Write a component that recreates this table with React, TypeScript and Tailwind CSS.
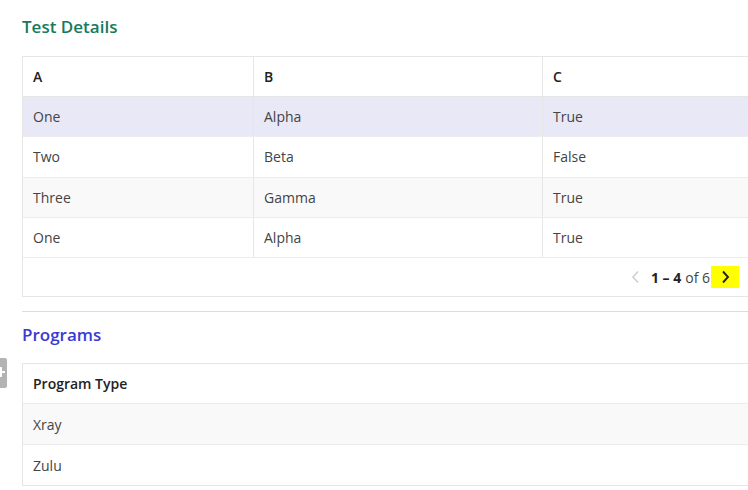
import React from "react";

const rows = [
  { a: "One", b: "Alpha", c: "True" },
  { a: "Two", b: "Beta", c: "False" },
  { a: "Three", b: "Gamma", c: "True" },
  { a: "One", b: "Alpha", c: "True" },
];

function rowBg(i: number) {
  if (i === 0) return "bg-[#e8e8f7]";
  return i % 2 === 0 ? "bg-[#f9f9f9]" : "bg-white";
}

export default function App() {
  return (
    <div
      className="relative w-[748px] h-[490px] overflow-hidden bg-white text-[#333]"
      style={{ fontFamily: '"Open Sans", "Liberation Sans", sans-serif' }}
    >
      <div className="w-[732px] ml-[22px]">
        <h2 className="h-[56px] pt-[14px] text-[17px] font-semibold text-[#167a5c] leading-[26px]">
          Test Details
        </h2>

        <div className="border border-[#e6e6e6] text-[14px]">
          <div className="grid grid-cols-[231px_289px_1fr] h-[40px] font-semibold text-[#222] border-b border-[#e6e6e6]">
            <div className="flex items-center px-[10px] border-r border-[#e6e6e6]">A</div>
            <div className="flex items-center px-[10px] border-r border-[#e6e6e6]">B</div>
            <div className="flex items-center px-[10px]">C</div>
          </div>
          {rows.map((r, i) => (
            <div
              key={i}
              className={`grid grid-cols-[231px_289px_1fr] h-[40.25px] text-[#444] border-b border-[#ececec] ${rowBg(i)}`}
            >
              <div className="flex items-center px-[10px] border-r border-[#e6e6e6]">{r.a}</div>
              <div className="flex items-center px-[10px] border-r border-[#e6e6e6]">{r.b}</div>
              <div className="flex items-center px-[10px]">{r.c}</div>
            </div>
          ))}
          <div className="h-[38px] flex items-center justify-end pr-[14px] text-[14px]">
            <svg width="10" height="14" viewBox="0 0 10 14" className="mr-[10px]">
              <path d="M7 1.5 2 7l5 5.5" fill="none" stroke="#cfcfcf" strokeWidth="1.6" />
            </svg>
            <span className="font-bold text-[#222]">1 – 4</span>
            <span className="ml-[4px] text-[#444]">of 6</span>
            <span className="ml-[1px] w-[28px] h-[22px] bg-[#ffff00] flex items-center justify-center">
              <svg width="10" height="14" viewBox="0 0 10 14">
                <path d="M3 1.5 8 7l-5 5.5" fill="none" stroke="#222" strokeWidth="1.9" />
              </svg>
            </span>
          </div>
        </div>

        <div className="mt-[14px] border-t border-[#dcdcdc]" />

        <h2 className="h-[51px] pt-[10px] text-[17px] font-semibold text-[#3a3ad4] leading-[26px]">
          Programs
        </h2>

        <div className="border border-[#e6e6e6] text-[14px]">
          <div className="h-[40px] flex items-center px-[10px] font-semibold text-[#222] border-b border-[#ececec]">
            Program Type
          </div>
          <div className="h-[41px] flex items-center px-[10px] text-[#444] bg-[#f9f9f9] border-b border-[#ececec]">
            Xray
          </div>
          <div className="h-[40px] flex items-center px-[10px] text-[#444] bg-white">Zulu</div>
        </div>
      </div>

      <div className="absolute left-0 top-[358px] w-[7px] h-[30px] bg-[#b3b3b3] rounded-r-[2px] overflow-hidden">
        <div className="absolute left-[-4px] top-[13px] w-[9px] h-[2px] bg-white" />
        <div className="absolute left-[0px] top-[9px] w-[2px] h-[10px] bg-white" />
      </div>
    </div>
  );
}
